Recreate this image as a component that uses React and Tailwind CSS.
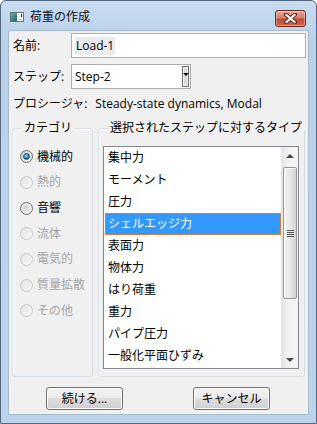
import React from 'react';

const categories = [
  { label: '機械的', state: 'checked' },
  { label: '熱的', state: 'disabled' },
  { label: '音響', state: 'normal' },
  { label: '流体', state: 'disabled' },
  { label: '電気的', state: 'disabled' },
  { label: '質量拡散', state: 'disabled' },
  { label: 'その他', state: 'disabled' },
];

const loadTypes = [
  '集中力',
  'モーメント',
  '圧力',
  'シェルエッジ力',
  '表面力',
  '物体力',
  'はり荷重',
  '重力',
  'パイプ圧力',
  '一般化平面ひずみ',
];

const Radio = ({ state }) => {
  if (state === 'checked') {
    return (
      <span className="w-[13px] h-[13px] rounded-full border border-[#6a6a6a] bg-gradient-to-br from-[#c9c9c9] to-[#fbfbfb] flex items-center justify-center shrink-0">
        <span className="w-[7px] h-[7px] rounded-full border border-[#1d4f7a] bg-[radial-gradient(circle_at_40%_35%,#9ad6ff,#2a7fc4_55%,#0d3f6e)]" />
      </span>
    );
  }
  if (state === 'normal') {
    return (
      <span className="w-[13px] h-[13px] rounded-full border border-[#6f6f6f] bg-gradient-to-br from-[#c4c4c4] to-[#f7f7f7] shrink-0 shadow-[inset_0_0_0_2px_#ececec]" />
    );
  }
  return (
    <span className="w-[13px] h-[13px] rounded-full border border-[#c8c8c8] bg-gradient-to-br from-[#e2e2e2] to-[#f8f8f8] shrink-0" />
  );
};

const GroupBox = ({ title, width, children }) => (
  <div className={`relative h-[249px] ${width} rounded-[3px] border border-[#d5dfe5] shadow-[inset_1px_1px_0_#ffffff]`}>
    <span className="absolute left-[9px] -top-[9px] px-[2px] bg-[#f0f0f0] leading-[16px] text-black whitespace-nowrap">
      {title}
    </span>
    {children}
  </div>
);

const WinButton = ({ children }) => (
  <button className="w-[77px] h-[23px] rounded-[3px] border border-[#707070] bg-[linear-gradient(to_bottom,#f2f2f2_0%,#ebebeb_50%,#dddddd_50%,#cfcfcf_100%)] shadow-[inset_0_0_0_1px_#fcfcfc] text-black leading-[16px] flex items-center justify-center">
    {children}
  </button>
);

const App = () => {
  return (
    <div className="w-[317px] h-[424px] bg-white text-[12px] leading-[16px] [font-family:'Open_Sans','Noto_Sans_CJK_JP',sans-serif]">
      <div className="w-full h-full flex flex-col rounded-t-[6px] border border-[#55677c] bg-[linear-gradient(to_bottom,#c8dbef,#bad1ea_40px,#bcd3eb)] px-[7px] pb-[8px]">
        {/* Title bar */}
        <div className="h-[29px] flex items-center justify-between pl-[2px] pr-[2px] shrink-0">
          <div className="flex items-center gap-[6px] pt-[3px]">
            <svg width="14" height="10" viewBox="0 0 14 10">
              <rect x="0.5" y="0.5" width="13" height="9" fill="#ffffff" stroke="#6a6f75" />
              <defs>
                <linearGradient id="ic" x1="0" y1="0" x2="1" y2="1">
                  <stop offset="0" stopColor="#5fa7b7" />
                  <stop offset="1" stopColor="#1f6a4f" />
                </linearGradient>
              </defs>
              <rect x="1" y="1" width="6" height="8" fill="url(#ic)" />
              <rect x="11" y="2" width="1" height="3" fill="#1a1a1a" />
              <rect x="9" y="7" width="3" height="1" fill="#b5b5b5" />
            </svg>
            <span className="text-[12px] text-[#101010]">荷重の作成</span>
          </div>
          <div className="w-[31px] h-[17px] mt-[5px] mr-[1px] rounded-[3px] border border-[#6d2c22] bg-[linear-gradient(to_bottom,#e7a897,#d4806c_45%,#c2452f_55%,#cf6a4e)] shadow-[inset_0_0_0_1px_rgba(255,255,255,0.35)] flex items-center justify-center">
            <svg width="13" height="11" viewBox="0 0 13 11">
              <path d="M2 1.5 L11 9.5 M11 1.5 L2 9.5" stroke="#5a2a22" strokeWidth="4" strokeLinecap="square" />
              <path d="M2.5 2 L10.5 9 M10.5 2 L2.5 9" stroke="#ffffff" strokeWidth="2.2" strokeLinecap="square" />
            </svg>
          </div>
        </div>

        {/* Client area */}
        <div className="flex-1 flex flex-col border border-[#a7bbd0] bg-[#f0f0f0] text-black">
          {/* Name */}
          <div className="flex items-center mt-[2px] pl-[4px] pr-[2px]">
            <span className="w-[58px]">名前:</span>
            <div className="flex-1 h-[25px] border border-[#abadb3] bg-white flex items-center pl-[3px]">
              <span className="bg-[#ebebeb] h-[18px] flex items-center px-[1px]">Load-1</span>
            </div>
          </div>

          {/* Step */}
          <div className="flex items-center mt-[6px] pl-[4px]">
            <span className="w-[58px] whitespace-nowrap">ステップ:</span>
            <div className="w-[120px] h-[25px] border border-[#abadb3] bg-white flex items-center justify-between pl-[3px] pr-[1px]">
              <span>Step-2</span>
              <div className="w-[7px] h-[21px] border border-[#6f6f6f] bg-[#dadada] shadow-[inset_0_0_0_1px_#f4f4f4] flex justify-center pt-[6px]">
                <span className="w-0 h-0 border-x-[3px] border-x-transparent border-t-[3px] border-t-black" />
              </div>
            </div>
          </div>

          {/* Procedure */}
          <div className="flex items-center mt-[7px] pl-[4px] h-[16px] whitespace-nowrap">
            <span>プロシージャ:</span>
            <span className="ml-[8px]">Steady-state dynamics, Modal</span>
          </div>

          {/* Group boxes */}
          <div className="flex mt-[16px] ml-[3px] gap-[5px]">
            <GroupBox title="カテゴリ" width="w-[81px]">
              <div className="flex flex-col pt-[15px] pl-[7px]">
                {categories.map((c) => (
                  <div key={c.label} className="h-[25.67px] flex items-center gap-[4px]">
                    <Radio state={c.state} />
                    <span className={`whitespace-nowrap ${c.state === 'disabled' ? 'text-[#a6a6a6]' : 'text-black'}`}>
                      {c.label}
                    </span>
                  </div>
                ))}
              </div>
            </GroupBox>

            <GroupBox title="選択されたステップに対するタイプ" width="w-[207px]">
              <div className="pt-[17px] pl-[4px]">
                <div className="w-[196px] h-[223px] border border-[#828790] bg-white flex">
                  <div className="flex-1 flex flex-col pl-[1px] pt-0">
                    {loadTypes.map((t, i) => (
                      <div
                        key={t}
                        className={`h-[22px] flex items-center pl-[3px] whitespace-nowrap ${
                          i === 3
                            ? 'bg-[#3399ff] text-white outline-1 outline-dotted outline-[#d08a40] -outline-offset-1'
                            : 'text-black'
                        }`}
                      >
                        {t}
                      </div>
                    ))}
                  </div>

                  {/* Scrollbar */}
                  <div className="w-[17px] h-full flex flex-col bg-[linear-gradient(to_right,#e4e4e4,#f1f1f1_30%,#f4f4f4)] border-l border-[#e6e6e6]">
                    <div className="h-[17px] flex items-center justify-center">
                      <span className="w-0 h-0 border-x-[4px] border-x-transparent border-b-[4px] border-b-[#4a4a4a]" />
                    </div>
                    <div className="h-[132px] mt-[3px] mx-[1px] rounded-[2px] border border-[#969696] bg-[linear-gradient(to_right,#f4f4f4,#e6e6e6_50%,#d2d2d2)] shadow-[inset_1px_1px_0_#fdfdfd] flex flex-col items-center justify-center gap-[1px]">
                      <span className="w-[7px] h-[1px] bg-[#5a5a5a]" />
                      <span className="w-[7px] h-[1px] bg-[#5a5a5a]" />
                      <span className="w-[7px] h-[1px] bg-[#5a5a5a]" />
                      <span className="w-[7px] h-[1px] bg-[#5a5a5a]" />
                    </div>
                    <div className="flex-1" />
                    <div className="h-[17px] flex items-center justify-center">
                      <span className="w-0 h-0 border-x-[4px] border-x-transparent border-t-[4px] border-t-[#4a4a4a]" />
                    </div>
                  </div>
                </div>
              </div>
            </GroupBox>
          </div>

          {/* Buttons */}
          <div className="flex mt-[10px] pl-[37px] gap-[70px]">
            <WinButton>続ける...</WinButton>
            <WinButton>キャンセル</WinButton>
          </div>
        </div>
      </div>
    </div>
  );
};

export default App;
